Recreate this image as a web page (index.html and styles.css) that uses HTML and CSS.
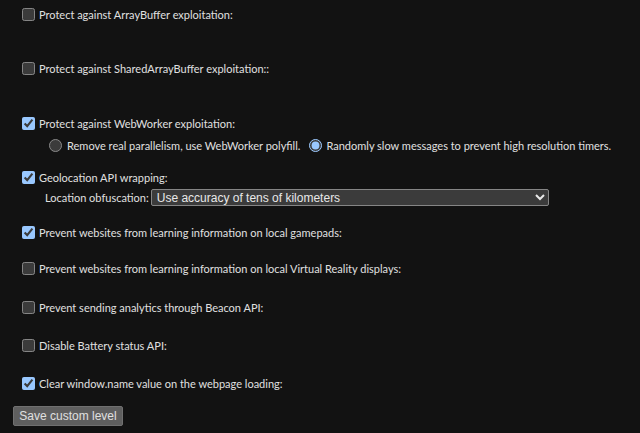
FILE: index.html
```html
<!DOCTYPE html>
<html>
<head>
<meta charset="utf-8">
<link rel="stylesheet" href="styles.css">
</head>
<body>
<div class="page">
  <div class="opt gap-lg">
    <label class="row"><input type="checkbox"><span>Protect against ArrayBuffer exploitation:</span></label>
  </div>
  <div class="opt gap-lg2">
    <label class="row"><input type="checkbox"><span>Protect against SharedArrayBuffer exploitation::</span></label>
  </div>
  <div class="opt gap-sub">
    <label class="row"><input type="checkbox" checked><span>Protect against WebWorker exploitation:</span></label>
    <div class="sub radios">
      <label class="row"><input type="radio" name="ww"><span>Remove real parallelism, use WebWorker polyfill.</span></label>
      <label class="row"><input type="radio" name="ww" checked><span>Randomly slow messages to prevent high resolution timers.</span></label>
    </div>
  </div>
  <div class="opt gap-geo">
    <label class="row"><input type="checkbox" checked><span>Geolocation API wrapping:</span></label>
    <div class="sub selrow">
      <span>Location obfuscation:</span>
      <select class="sel"><option>Use accuracy of tens of kilometers</option></select>
    </div>
  </div>
  <div class="opt gap-a">
    <label class="row"><input type="checkbox" checked><span>Prevent websites from learning information on local gamepads:</span></label>
  </div>
  <div class="opt gap-b">
    <label class="row"><input type="checkbox"><span>Prevent websites from learning information on local Virtual Reality displays:</span></label>
  </div>
  <div class="opt gap-c">
    <label class="row"><input type="checkbox"><span>Prevent sending analytics through Beacon API:</span></label>
  </div>
  <div class="opt gap-d">
    <label class="row"><input type="checkbox"><span>Disable Battery status API:</span></label>
  </div>
  <div class="opt gap-btn">
    <label class="row"><input type="checkbox" checked><span>Clear window.name value on the webpage loading:</span></label>
  </div>
  <button class="save">Save custom level</button>
</div>
</body>
</html>
```

FILE: styles.css
```css
html, body {
  margin: 0;
  padding: 0;
  background: #121212;
  color-scheme: dark;
}
.page {
  padding: 6px 0 0 13px;
  font-family: Lato, "Open Sans", sans-serif;
  font-size: 11px;
  color: #e0e0e0;
}
.row {
  display: inline-flex;
  align-items: center;
  height: 16px;
  white-space: nowrap;
}
.row input {
  margin: 0 4px 0 9px;
  width: 13px;
  height: 13px;
}
.opt {
  display: flex;
  flex-direction: column;
  align-items: flex-start;
}
.gap-lg { margin-bottom: 38px; }
.gap-lg2 { margin-bottom: 39px; }
.gap-sub { margin-bottom: 16px; }
.gap-geo { margin-bottom: 18px; }
.gap-a { margin-bottom: 20px; }
.gap-b { margin-bottom: 23px; }
.gap-c { margin-bottom: 22px; }
.gap-d { margin-bottom: 22px; }
.gap-btn { margin-bottom: 6px; }
.sub {
  display: flex;
  align-items: center;
}
.radios {
  margin-top: 6px;
  padding-left: 36px;
}
.radios .row input {
  margin: 0 4px 0 9px;
}
.radios .row:first-child input { margin: 0 5px 0 0; }
.selrow {
  margin-top: 4px;
  padding-left: 32px;
  gap: 2px;
}
.sel {
  width: 398px;
  height: 17px;
  font-family: "Liberation Sans", Arial, sans-serif;
  font-size: 12px;
  color: #e8e8e8;
  background: #3b3b3b;
  border: 1px solid #858585;
  border-radius: 2px;
  padding: 0 1px;
}
.save {
  font-family: "Liberation Sans", Arial, sans-serif;
  font-size: 12px;
  color: #e0e0e0;
  background: #5f5f5f;
  border: 1px solid #707070;
  border-radius: 2px;
  height: 20px;
  width: 110px;
  padding: 0;
  margin-top: 9px;
}
```
